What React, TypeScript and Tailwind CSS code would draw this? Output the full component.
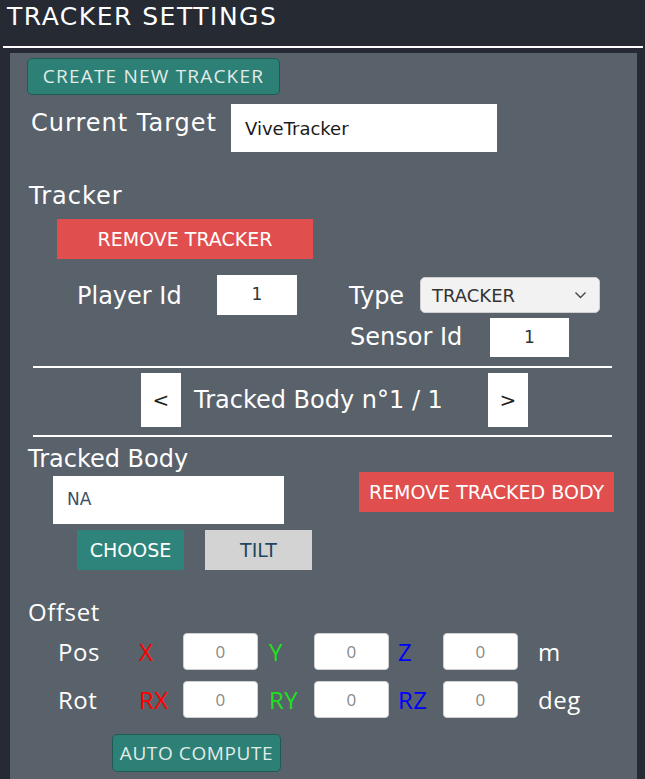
import React from "react";

const SQ = "font-['DejaVu_Sans','Liberation_Sans',sans-serif]";
const RD = "font-['Open_Sans','Lato',sans-serif]";

function OffsetInput() {
  return (
    <div className="w-[75px] h-[37px] bg-white rounded-[4px] border border-[#cfcfcf] flex items-center justify-center text-[17px] text-[#8a8a8a]">
      0
    </div>
  );
}

function OffsetRow({ label, a, b, c, unit }: { label: string; a: string; b: string; c: string; unit: string }) {
  return (
    <div className="flex items-center h-[37px] text-[24px] leading-[32px] tracking-[0.5px]">
      <div className="ml-[48px] w-[81px] text-white">{label}</div>
      <div className="w-[44px] text-[#ff0000]">{a}</div>
      <OffsetInput />
      <div className="ml-[11px] w-[45px] text-[#1fe01f]">{b}</div>
      <OffsetInput />
      <div className="ml-[9px] w-[45px] text-[#0000ff]">{c}</div>
      <OffsetInput />
      <div className="ml-[20px] text-white">{unit}</div>
    </div>
  );
}

export default function App() {
  return (
    <div className={`w-[645px] h-[779px] bg-[#252a33] overflow-hidden ${SQ}`}>
      <div className="h-[46px] pl-[7px] pt-[2px] text-white text-[25px] leading-[30px] tracking-[1.5px]">TRACKER SETTINGS</div>
      <div className="ml-[3px] w-[640px] h-[2px] bg-white" />
      <div className="ml-[10px] mt-[5px] w-[627px] h-[726px] bg-[#59616a] flex flex-col">
        <button className={`ml-[17px] mt-[5px] w-[253px] h-[37px] rounded-[5px] bg-[#2c8075] border border-[#1f5b53] text-[#e2ebe8] text-[19px] tracking-[1.2px] ${RD}`}>
          CREATE NEW TRACKER
        </button>
        <div className="flex mt-[9px]">
          <div className="ml-[21px] mt-[5px] w-[200px] text-white text-[24px] leading-[28px] tracking-[1px]">Current Target</div>
          <div className="w-[266px] h-[48px] bg-white flex items-center pl-[14px] text-[18px] text-[#1a1a1a]">ViveTracker</div>
        </div>
        <div className="ml-[19px] mt-[30px] h-[28px] text-white text-[24px] leading-[28px] tracking-[1px]">Tracker</div>
        <button className="ml-[47px] mt-[9px] w-[256px] h-[40px] bg-[#e04e4e] text-white text-[19px]">REMOVE TRACKER</button>
        <div className="flex mt-[16px] h-[40px]">
          <div className="ml-[67px] w-[140px] mt-[7px] text-white text-[24px] leading-[28px]">Player Id</div>
          <div className="w-[80px] h-[40px] bg-white flex items-center justify-center text-[17px] text-[#333]">1</div>
          <div className="ml-[52px] w-[71px] mt-[7px] text-white text-[24px] leading-[28px]">Type</div>
          <div className="mt-[2px] w-[180px] h-[36px] bg-[#f2f2f2] rounded-[5px] border border-[#cfcfcf] flex items-center justify-between pl-[11px] pr-[12px] text-[#333] text-[18px]">
            <span>TRACKER</span>
            <svg width="13" height="8" viewBox="0 0 13 8" fill="none" stroke="#444" strokeWidth="1.4"><path d="M1.5 1.5 L6.5 6.5 L11.5 1.5" /></svg>
          </div>
        </div>
        <div className="flex mt-[3px] h-[39px]">
          <div className="ml-[340px] w-[140px] mt-[5px] text-white text-[24px] leading-[28px]">Sensor Id</div>
          <div className="w-[79px] h-[39px] bg-white flex items-center justify-center text-[17px] text-[#333]">1</div>
        </div>
        <div className="ml-[23px] mt-[9px] w-[579px] h-[2px] bg-white" />
        <div className="flex items-center mt-[5px] h-[54px]">
          <div className="ml-[131px] w-[40px] h-[54px] bg-white flex items-center justify-center text-[20px] text-[#222]">&lt;</div>
          <div className="w-[307px] pl-[13px] text-white text-[24px] leading-[28px]">Tracked Body n°1 / 1</div>
          <div className="w-[40px] h-[54px] bg-white flex items-center justify-center text-[20px] text-[#222]">&gt;</div>
        </div>
        <div className="ml-[23px] mt-[8px] w-[579px] h-[2px] bg-white" />
        <div className="ml-[18px] mt-[8px] h-[27px] text-white text-[24px] leading-[28px]">Tracked Body</div>
        <div className="flex">
          <div className="ml-[43px] mt-[4px] w-[231px] h-[48px] bg-white flex items-center pl-[14px] text-[17px] text-[#3c5068]">NA</div>
          <button className="ml-[75px] w-[255px] h-[40px] bg-[#e04e4e] text-white text-[19px]">REMOVE TRACKED BODY</button>
        </div>
        <div className="flex mt-[6px]">
          <button className="ml-[67px] w-[107px] h-[40px] bg-[#2e847a] text-white text-[19px]">CHOOSE</button>
          <button className="ml-[21px] w-[107px] h-[40px] bg-[#d3d3d3] text-[#1f4763] text-[19px]">TILT</button>
        </div>
        <div className={`${RD} flex flex-col`}>
          <div className="ml-[18px] mt-[26px] h-[32px] text-white text-[24px] leading-[32px] tracking-[0.6px]">Offset</div>
          <div className="mt-[5px]">
            <OffsetRow label="Pos" a="X" b="Y" c="Z" unit="m" />
          </div>
          <div className="mt-[11px]">
            <OffsetRow label="Rot" a="RX" b="RY" c="RZ" unit="deg" />
          </div>
          <button className="ml-[102px] mt-[16px] w-[169px] h-[38px] rounded-[5px] bg-[#2c8075] border border-[#1f5b53] text-[#e2ebe8] text-[19px] tracking-[0.6px]">
            AUTO COMPUTE
          </button>
        </div>
      </div>
    </div>
  );
}
